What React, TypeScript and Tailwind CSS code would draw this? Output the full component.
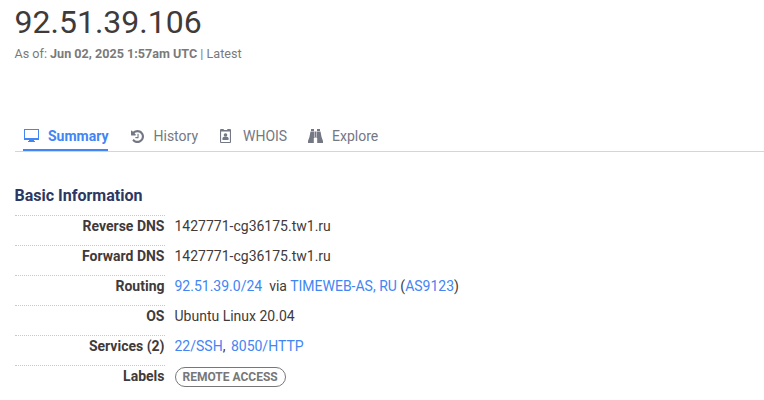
import type { ReactNode } from "react";

function DesktopIcon() {
  return (
    <svg width="15" height="14" viewBox="0 0 15 14" fill="currentColor" shapeRendering="crispEdges">
      <path fillRule="evenodd" d="M0 0h15v11H10v1h1v1H4v-1h1v-1H0ZM1 1v8h13V1Z" />
    </svg>
  );
}

function HistoryIcon() {
  return (
    <svg className="ml-px" width="13" height="13" viewBox="0 128 1536 1536" fill="currentColor">
      <path d="M1536 896q0 156-61 298t-164 245-245 164-298 61q-172 0-327-72.5T177 1387q-7-10-6.5-22.5T179 1344l137-138q10-9 25-9 16 2 23 12 73 95 179 147t225 52q104 0 198.500-40.500T1130 1258t109.500-163.500T1280 896t-40.500-198.500T1130 534 966.500 424.500 768 384q-98 0-188 35.500T420 521l137 138q31 30 14 69-17 40-59 40H64q-26 0-45-19T0 704V256q0-42 40-59 39-17 69 14l130 129q107-101 244.500-156.500T768 128q156 0 298 61t245 164 164 245 61 298zM896 608v448q0 14-9 23t-23 9H544q-14 0-23-9t-9-23v-64q0-14 9-23t23-9h224V608q0-14 9-23t23-9h64q14 0 23 9t9 23z" />
    </svg>
  );
}

function BadgeIcon() {
  return (
    <svg className="ml-px" width="11" height="14" viewBox="0 0 11 14" fill="currentColor">
      <path fillRule="evenodd" d="M1 0h2.500l.5 1h3l.5-1H10q1 0 1 1v12q0 1-1 1H1q-1 0-1-1V1q0-1 1-1ZM1.100 2.500v10.500h8.800V2.500Z" />
      <circle cx="5.5" cy="6" r="1.8" />
      <path d="M2.500 11V9.200q0-1.500 1.500-1.500h3q1.500 0 1.500 1.500V11Z" />
    </svg>
  );
}

function BinocularsIcon() {
  return (
    <svg width="15" height="14" viewBox="0 0 15 14" fill="currentColor">
      <path d="M3 0h3v2H3ZM9 0h3v2H9ZM2.500 2.500h4V14H.5Q0 14 0 13.500V12Q1.800 8 2.500 2.500ZM8.500 2.500h4Q13.200 8 15 12v1.500q0 .5-.5.5h-6Z" />
      <path d="M7 2.500h1V8.500H7Z" />
      <path d="M5.800 9h3.400v5H5.800Z" fill="white" />
    </svg>
  );
}

function Tab({ icon, label, width, active }: { icon: ReactNode; label: string; width: string; active?: boolean }) {
  return (
    <a className={`flex h-[31px] items-start whitespace-nowrap ${width} ${active ? "border-b-2 border-[#4285f4] pl-px font-bold text-[#4285f4]" : "text-[#747784]"}`}>
      <span className="mt-[9px] flex h-[14px] w-[16px] shrink-0 items-center">{icon}</span>
      <span className="ml-2 pt-[6px] leading-5">{label}</span>
    </a>
  );
}

function Row({ label, children }: { label: string; children: ReactNode }) {
  return (
    <div className="flex h-[30px]">
      <dt className="w-[150px] border-t border-dotted border-[#c8c8c8] pr-[0.5px] text-right leading-5 font-bold">{label}</dt>
      <dd className="ml-[9.5px] pt-px leading-5 whitespace-nowrap">{children}</dd>
    </div>
  );
}

function Link({ children }: { children: ReactNode }) {
  return <a className="text-[#4285f4]">{children}</a>;
}

export default function App() {
  return (
    <main className="h-[400px] overflow-hidden bg-white pl-[15px] font-['Roboto',sans-serif] text-[14px] text-[#403a3a]">
      <h1 className="-ml-[0.5px] h-[44px] text-[32px] leading-[44px]">92.51.39.106</h1>
      <p className="-ml-[0.5px] h-5 text-[12.6px] leading-5 text-[#7a7a7a]">
        As of: <b>Jun 02, 2025 1:57am UTC</b> | Latest
      </p>
      <nav className="mt-[56px] flex h-[32px] border-b border-[#d5d5d5] pl-2">
        <Tab icon={<DesktopIcon />} label="Summary" width="mr-[21.5px] w-[85px]" active />
        <Tab icon={<HistoryIcon />} label="History" width="w-[89.5px]" />
        <Tab icon={<BadgeIcon />} label="WHOIS" width="w-[89px]" />
        <Tab icon={<BinocularsIcon />} label="Explore" width="w-[80px]" />
      </nav>
      <h2 className="-ml-[0.5px] mt-[33px] h-[30px] text-[16px] leading-[22px] font-bold text-[#2c3763]">Basic Information</h2>
      <dl>
        <Row label="Reverse DNS">1427771-cg36175.tw1.ru</Row>
        <Row label="Forward DNS">1427771-cg36175.tw1.ru</Row>
        <Row label="Routing">
          <Link>92.51.39.0/24</Link><span className="ml-[7px]">via </span><Link>TIMEWEB-AS, RU</Link> (<Link>AS9123</Link>)
        </Row>
        <Row label="OS">Ubuntu Linux 20.04</Row>
        <Row label="Services (2)"><Link>22/SSH</Link>,<span className="ml-[5.5px]"><Link>8050/HTTP</Link></span></Row>
        <Row label="Labels">
          <span className="mt-px flex h-5 items-center rounded-full border border-[#777] px-[7px] text-[12px] font-bold text-[#777]">REMOTE ACCESS</span>
        </Row>
      </dl>
    </main>
  );
}
